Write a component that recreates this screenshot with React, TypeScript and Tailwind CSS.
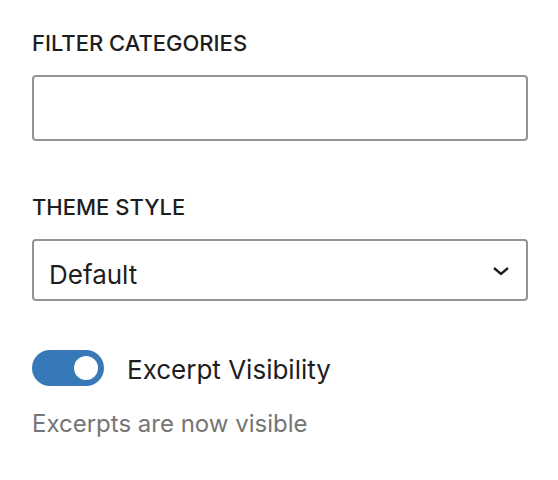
import React, { useState } from 'react';

const font = { fontFamily: 'Inter, "Noto Sans", sans-serif' };

const Chevron = () => (
  <svg width="18" height="10" viewBox="0 0 18 10" fill="none">
    <path d="M2 2l7 6 7-6" stroke="#1e1e1e" strokeWidth="2.4" />
  </svg>
);

export default function App() {
  const [visible, setVisible] = useState(true);

  return (
    <div className="w-[558px] h-[480px] bg-white text-[#1e1e1e]" style={font}>
      <div className="flex flex-col pl-[32px] pr-[30px] pt-[32px]">
        <label className="text-[22px] leading-[22px] font-medium uppercase">Filter Categories</label>
        <input
          type="text"
          className="mt-[21px] h-[66px] w-full rounded-[4px] border-2 border-[#949494] bg-white px-[14px] text-[26px] outline-none"
        />

        <label className="mt-[55px] text-[22px] leading-[22px] font-medium uppercase">Theme Style</label>
        <div className="mt-[21px] flex h-[62px] w-full items-start justify-between rounded-[4px] border-2 border-[#949494] pl-[15px] pr-[16px] pt-[21px]">
          <span className="text-[26px] leading-[26px]">Default</span>
          <span className="mt-[4px]">
            <Chevron />
          </span>
        </div>

        <div className="mt-[49px] flex items-center gap-[23px]">
          <button
            onClick={() => setVisible(!visible)}
            className={`relative h-[36px] w-[72px] shrink-0 rounded-full ${visible ? 'bg-[#3778b9]' : 'bg-[#949494]'}`}
          >
            <span
              className={`absolute top-[6px] h-[24px] w-[24px] rounded-full bg-white ${visible ? 'left-[42px]' : 'left-[6px]'}`}
            />
          </button>
          <span className="mt-[3px] text-[26px] leading-[26px]">Excerpt Visibility</span>
        </div>

        <p className="mt-[26px] text-[24px] leading-[24px] text-[#757575]">
          {visible ? 'Excerpts are now visible' : 'Excerpts are hidden'}
        </p>
      </div>
    </div>
  );
}
